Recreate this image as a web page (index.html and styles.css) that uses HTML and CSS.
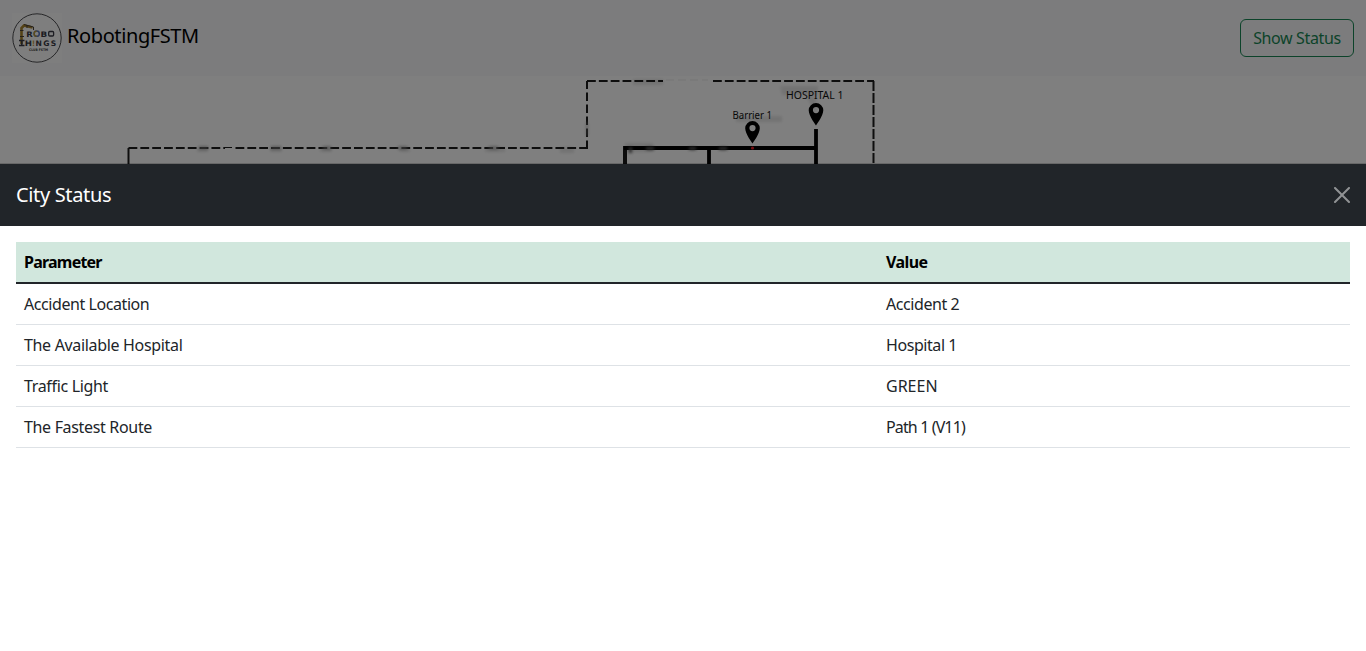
FILE: index.html
```html
<!DOCTYPE html>
<html lang="en">
<head>
<meta charset="utf-8">
<title>RobotingFSTM</title>
<link rel="stylesheet" href="styles.css">
</head>
<body>
<nav class="navbar">
  <a class="brand">
    <svg class="logo" viewBox="0 0 50 50" aria-label="Robo Things">
      <rect width="50" height="50" fill="#fdfdfd"/>
      <circle cx="25" cy="25" r="24.2" fill="none" stroke="#39393d" stroke-width="0.9"/>
      <path d="M9.500 31V22M9.500 22V15l2.500-2.500 8.500 2" fill="none" stroke="#a9842c" stroke-width="2.600"/>
      <path d="M12 11.500l9.500 2.500v3M8 23.500h4M8 17.500h3.500M15 12v3" fill="none" stroke="#4c4338" stroke-width="1"/>
      <path d="M7 27.500h5.500M9.800 27v5M7 32.500h5.500" fill="none" stroke="#3b3b46" stroke-width="1.500"/>
      <g class="logo-word">
        <text x="14.300" y="23.600" textLength="6.500" lengthAdjust="spacingAndGlyphs">R</text>
        <circle cx="24.700" cy="20.700" r="2.600" fill="none" stroke="#5a77c0" stroke-width="1.500"/>
        <path d="M24.700 18.100a2.600 2.600 0 0 0 0 5.200" fill="none" stroke="#c19a32" stroke-width="1.300"/>
        <text x="28.400" y="23.600" textLength="6.700" lengthAdjust="spacingAndGlyphs">B</text>
        <rect x="36.700" y="18.500" width="4.900" height="4.500" rx="1" fill="none" stroke="#3b3b46" stroke-width="1.300"/>
        <text x="12.800" y="33" textLength="7.200" lengthAdjust="spacingAndGlyphs">H</text>
        <text class="logo-gold" x="20" y="33" textLength="3" lengthAdjust="spacingAndGlyphs">!</text>
        <text x="23.500" y="33" textLength="20.800" lengthAdjust="spacing">NGS</text>
      </g>
      <text class="logo-club" x="17" y="37.800" textLength="19" lengthAdjust="spacingAndGlyphs">CLUB FSTM</text>
    </svg>
    <span class="brand-name">RobotingFSTM</span>
  </a>
  <button class="btn-outline">Show Status</button>
</nav>
<main class="map">
  <svg class="city" viewBox="0 76 1366 575" width="1366" height="575">
    <defs>
      <filter id="smudge" x="-50%" y="-100%" width="200%" height="300%"><feGaussianBlur stdDeviation="1.500"/></filter>
    </defs>
    <g fill="#e6e6e6" filter="url(#smudge)">
      <path d="M780 86h38v9h-36zM736 116h46v6h-46zM806 96h10v18zM625 143h28v9h-28z"/>
      <path d="M197 147h11v5h-11zM270 147h12v5h-12zM320 147h12v5h-12zM400 147h10v5h-10zM485 147h20v5h-20zM560 147h14v6h-14zM633 79h30v6h-30z"/>
    </g>
    <g fill="none" stroke="#1c1c1c" stroke-width="2">
      <path d="M128.500 148V166"/>
      <path d="M128.500 148H225" stroke-dasharray="8.800 3.050"/>
      <path d="M225 147.500h7" stroke-width="1"/>
      <path d="M235.500 148H586" stroke-dasharray="8.800 3.050"/>
      <path d="M587 149V81" stroke-dasharray="8.500 3.500"/>
      <path d="M587 81H663" stroke-dasharray="8.800 3.050"/>
      <path d="M666 80h42" stroke="#dedede" stroke-width="0.600" stroke-dasharray="8 4"/>
      <path d="M713 81H874" stroke-dasharray="8.800 3.050"/>
      <path d="M873.500 81V166" stroke-dasharray="10 2"/>
    </g>
    <g fill="#999" opacity="0.600" filter="url(#smudge)"><path d="M199 146h9v4h-9zM271 146h10v4h-10zM323 146h8v4h-8zM398 146h9v4h-9zM489 146h9v4h-9zM586 122h2v14h-2z"/></g>
    <path d="M625 166V148H816M709 148v18M816 129v37" fill="none" stroke="#000" stroke-width="3.800"/>
    <path d="M625 166V150" stroke="#333" stroke-width="1"/>
    <g fill="#555" filter="url(#smudge)"><path d="M646 147h8v3h-8zM689 147h7v3h-7zM719 147h8v3h-8zM629 147h3v6h-3z"/></g>
    <g fill="#000">
      <path fill-rule="evenodd" d="M752.500 121a7.300 7.300 0 0 0-7.300 7.300c0 5.500 7.300 15.200 7.300 15.200s7.300-9.700 7.300-15.200a7.300 7.300 0 0 0-7.300-7.300zm0 4a3.100 3.100 0 1 1 0 6.200 3.100 3.100 0 0 1 0-6.200z"/>
      <path fill-rule="evenodd" d="M816 103a7.300 7.300 0 0 0-7.300 7.300c0 5.500 7.300 15.200 7.300 15.200s7.300-9.700 7.300-15.200a7.300 7.300 0 0 0-7.300-7.300zm0 4a3.100 3.100 0 1 1 0 6.200 3.100 3.100 0 0 1 0-6.200z"/>
    </g>
    <circle cx="752.500" cy="148" r="1.600" fill="#ed1c24"/>
    <text class="pin-label" x="732.500" y="118.700" textLength="39.500" lengthAdjust="spacingAndGlyphs">Barrier 1</text>
    <text class="pin-label" x="786" y="99.300" textLength="57.500" lengthAdjust="spacingAndGlyphs">HOSPITAL 1</text>
  </svg>
</main>
<div class="backdrop"></div>
<section class="offcanvas">
  <header class="offcanvas-header">
    <h5 class="offcanvas-title">City Status</h5>
    <svg class="close" viewBox="0 0 16 16" aria-label="Close"><path fill="#fff" d="M.293.293a1 1 0 0 1 1.414 0L8 6.586 14.293.293a1 1 0 1 1 1.414 1.414L9.414 8l6.293 6.293a1 1 0 0 1-1.414 1.414L8 9.414l-6.293 6.293a1 1 0 0 1-1.414-1.414L6.586 8 .293 1.707a1 1 0 0 1 0-1.414z"/></svg>
  </header>
  <div class="offcanvas-body">
    <table class="table">
      <thead><tr><th class="col-parameter">Parameter</th><th class="col-value">Value</th></tr></thead>
      <tbody>
        <tr><td>Accident Location</td><td>Accident 2</td></tr>
        <tr><td class="snug">The Available Hospital</td><td>Hospital 1</td></tr>
        <tr><td class="snug">Traffic Light</td><td class="caps">GREEN</td></tr>
        <tr><td class="snug">The Fastest Route</td><td class="route">Path 1 (V11)</td></tr>
      </tbody>
    </table>
  </div>
</section>
</body>
</html>
```
FILE: styles.css
```css
* { box-sizing: border-box; }
body {
  margin: 0;
  height: 651px;
  overflow: hidden;
  background: #fff;
  color: #212529;
  font: 16px/1.5 "Noto Sans", sans-serif;
}
.navbar {
  display: flex;
  align-items: center;
  justify-content: space-between;
  height: 76px;
  padding: 0 12px;
  background: #f8f9fa;
}
.brand { display: flex; gap: 5px; color: #000; font-size: 20px; letter-spacing: -.4px; }
.brand-name { padding-top: 8px; }
.logo { width: 50px; height: 50px; letter-spacing: 0; }
.logo-word { font: bold 7.6px "DejaVu Sans", sans-serif; fill: #3b3b46; }
.logo-word .logo-gold { fill: #c19a32; }
.logo-club { font: bold 3.4px "DejaVu Sans", sans-serif; fill: #444; }
.btn-outline {
  width: 114px;
  height: 38px;
  padding: 0;
  border: 1px solid #198754;
  border-radius: 6px;
  background: none;
  color: #198754;
  font: inherit;
  letter-spacing: -.36px;
}
.map, .city { display: block; }
.pin-label { font: 10px "Noto Sans", sans-serif; fill: #111; }
.backdrop { position: fixed; inset: 0; background: rgba(0, 0, 0, .5); }
.offcanvas {
  position: fixed;
  inset: auto 0 0;
  height: 488px;
  border-top: 1px solid rgba(0, 0, 0, .175);
  background: #fff;
  background-clip: padding-box;
}
.offcanvas-header {
  display: flex;
  align-items: center;
  justify-content: space-between;
  padding: 16px;
  background: #212529;
  color: #fff;
}
.offcanvas-title { margin: 0; font-size: 20px; font-weight: 400; line-height: 30px; letter-spacing: -.35px; }
.close { width: 16px; height: 16px; opacity: .5; }
.offcanvas-body { padding: 16px; }
.table { width: 100%; border-collapse: collapse; table-layout: fixed; }
.table th, .table td { padding: 8px; border-bottom: 1px solid #dee2e6; text-align: left; }
.table td { letter-spacing: -.43px; }
.table th { background: #d1e7dd; color: #000; }
.table thead { border-bottom: 2px solid #212529; }
.table .col-parameter { width: 862px; letter-spacing: -.78px; }
.table .col-value { letter-spacing: -.6px; }
.table .snug { letter-spacing: -.33px; }
.table .caps { letter-spacing: 0; }
.table .route { letter-spacing: -.87px; }
```
